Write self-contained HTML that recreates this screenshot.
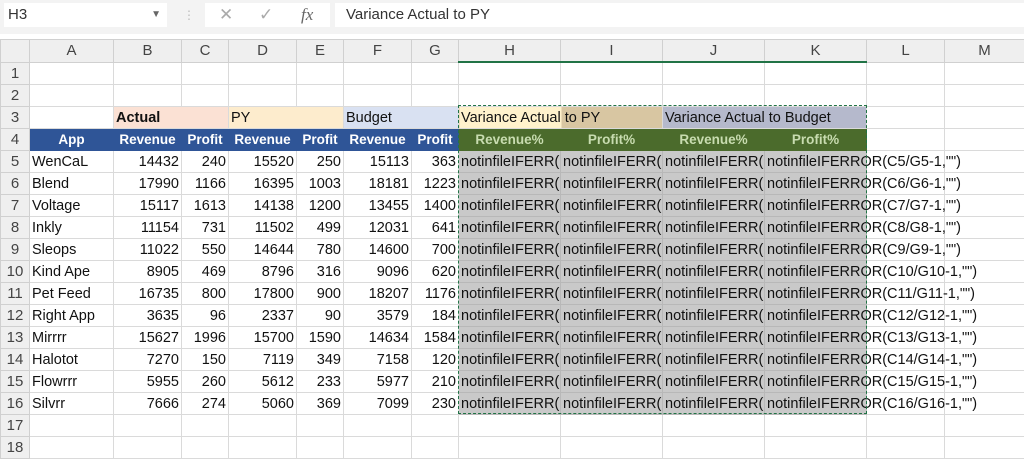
<!DOCTYPE html><html><head><meta charset="utf-8"><style>
body{margin:0;width:1024px;height:459px;overflow:hidden;background:#fff;font-family:"Liberation Sans",sans-serif;position:relative}
.top{position:absolute;left:0;top:0;width:1024px;height:34px;background:#f3f3f3}
.nb{position:absolute;left:4px;top:3px;width:163px;height:24px;background:#fff;font-size:15px;line-height:24px;padding-left:4px;box-sizing:border-box;color:#333}
.fx{position:absolute;left:205px;top:3px;width:125px;height:24px;background:#fff;color:#aaa;font-size:17px;line-height:24px}
.fb{position:absolute;left:335px;top:3px;width:689px;height:24px;background:#fff;font-size:15px;line-height:24px;padding-left:11px;box-sizing:border-box;color:#333}
table{position:absolute;left:0;top:39px;width:1024px;border-collapse:collapse;table-layout:fixed;font-size:14.5px}
td{border:1px solid #dadada;height:21px;padding:0 2px;white-space:nowrap;overflow:hidden;color:#111}
tr.h td{background:#efefef;text-align:center;color:#444;font-size:15px;border-color:#d0d0d0}
td.rh{background:#efefef;color:#444;text-align:center;font-size:15px;border-color:#d0d0d0}
td.sh{background:#d6d6d6;border-bottom:2px solid #217346!important}
td.n{text-align:right}
.b4{background:#2f5597;color:#fff;font-weight:bold;text-align:center;border-color:#2f5597;font-size:13.5px;padding:0 1px}
.g4{background:#4b6b2c;color:#c8dcb0;font-weight:bold;text-align:center;border-color:#4b6b2c;font-size:13.5px}
.s{background:#c9c9c9;border-color:#b8b8b8}
.k{background:#c9c9c9;border-color:#b8b8b8;overflow:visible}
</style></head><body>
<div class="top"><div class="nb">H3<span style="position:absolute;right:6px;font-size:10px;color:#666">▼</span></div>
<div style="position:absolute;left:183px;top:8px;color:#bbb;font-size:12px">⋮</div>
<div class="fx"><span style="position:absolute;left:14px">✕</span><span style="position:absolute;left:54px">✓</span><span style="position:absolute;left:96px;font-family:'Liberation Serif';font-style:italic;color:#666">fx</span></div>
<div class="fb">Variance Actual to PY</div></div>
<table>
<colgroup><col style="width:29px"><col style="width:84px"><col style="width:68px"><col style="width:47px"><col style="width:68px"><col style="width:47px"><col style="width:68px"><col style="width:47px"><col style="width:102px"><col style="width:102px"><col style="width:102px"><col style="width:102px"><col style="width:78px"><col style="width:80px"></colgroup>
<tr class="h"><td style="background:#efefef"></td><td>A</td><td>B</td><td>C</td><td>D</td><td>E</td><td>F</td><td>G</td><td class="sh">H</td><td class="sh">I</td><td class="sh">J</td><td class="sh">K</td><td>L</td><td>M</td></tr>
<tr><td class="rh">1</td><td></td><td></td><td></td><td></td><td></td><td></td><td></td><td></td><td></td><td></td><td></td><td></td><td></td></tr>
<tr><td class="rh">2</td><td></td><td></td><td></td><td></td><td></td><td></td><td></td><td></td><td></td><td></td><td></td><td></td><td></td></tr>
<tr><td class="rh">3</td><td></td><td colspan="2" style="background:#fbe1d4;font-weight:bold">Actual</td><td colspan="2" style="background:#fdeccd">PY</td><td colspan="2" style="background:#d9e1f2">Budget</td><td colspan="2" style="background:linear-gradient(90deg,#fff2cc 0 102px,#d8c6a2 102px)">Variance Actual to PY</td><td colspan="2" style="background:#b5b9cc">Variance Actual to Budget</td><td></td><td></td></tr>
<tr><td class="rh">4</td><td class="b4">App</td><td class="b4">Revenue</td><td class="b4">Profit</td><td class="b4">Revenue</td><td class="b4">Profit</td><td class="b4">Revenue</td><td class="b4">Profit</td><td class="g4">Revenue%</td><td class="g4">Profit%</td><td class="g4">Revenue%</td><td class="g4">Profit%</td><td></td><td></td></tr>
<tr><td class="rh">5</td><td>WenCaL</td><td class="n">14432</td><td class="n">240</td><td class="n">15520</td><td class="n">250</td><td class="n">15113</td><td class="n">363</td><td class="s">notinfileIFERR(</td><td class="s">notinfileIFERR(</td><td class="s">notinfileIFERR(</td><td class="k">notinfileIFERROR(C5/G5-1,"")</td><td></td><td></td></tr>
<tr><td class="rh">6</td><td>Blend</td><td class="n">17990</td><td class="n">1166</td><td class="n">16395</td><td class="n">1003</td><td class="n">18181</td><td class="n">1223</td><td class="s">notinfileIFERR(</td><td class="s">notinfileIFERR(</td><td class="s">notinfileIFERR(</td><td class="k">notinfileIFERROR(C6/G6-1,"")</td><td></td><td></td></tr>
<tr><td class="rh">7</td><td>Voltage</td><td class="n">15117</td><td class="n">1613</td><td class="n">14138</td><td class="n">1200</td><td class="n">13455</td><td class="n">1400</td><td class="s">notinfileIFERR(</td><td class="s">notinfileIFERR(</td><td class="s">notinfileIFERR(</td><td class="k">notinfileIFERROR(C7/G7-1,"")</td><td></td><td></td></tr>
<tr><td class="rh">8</td><td>Inkly</td><td class="n">11154</td><td class="n">731</td><td class="n">11502</td><td class="n">499</td><td class="n">12031</td><td class="n">641</td><td class="s">notinfileIFERR(</td><td class="s">notinfileIFERR(</td><td class="s">notinfileIFERR(</td><td class="k">notinfileIFERROR(C8/G8-1,"")</td><td></td><td></td></tr>
<tr><td class="rh">9</td><td>Sleops</td><td class="n">11022</td><td class="n">550</td><td class="n">14644</td><td class="n">780</td><td class="n">14600</td><td class="n">700</td><td class="s">notinfileIFERR(</td><td class="s">notinfileIFERR(</td><td class="s">notinfileIFERR(</td><td class="k">notinfileIFERROR(C9/G9-1,"")</td><td></td><td></td></tr>
<tr><td class="rh">10</td><td>Kind Ape</td><td class="n">8905</td><td class="n">469</td><td class="n">8796</td><td class="n">316</td><td class="n">9096</td><td class="n">620</td><td class="s">notinfileIFERR(</td><td class="s">notinfileIFERR(</td><td class="s">notinfileIFERR(</td><td class="k">notinfileIFERROR(C10/G10-1,"")</td><td></td><td></td></tr>
<tr><td class="rh">11</td><td>Pet Feed</td><td class="n">16735</td><td class="n">800</td><td class="n">17800</td><td class="n">900</td><td class="n">18207</td><td class="n">1176</td><td class="s">notinfileIFERR(</td><td class="s">notinfileIFERR(</td><td class="s">notinfileIFERR(</td><td class="k">notinfileIFERROR(C11/G11-1,"")</td><td></td><td></td></tr>
<tr><td class="rh">12</td><td>Right App</td><td class="n">3635</td><td class="n">96</td><td class="n">2337</td><td class="n">90</td><td class="n">3579</td><td class="n">184</td><td class="s">notinfileIFERR(</td><td class="s">notinfileIFERR(</td><td class="s">notinfileIFERR(</td><td class="k">notinfileIFERROR(C12/G12-1,"")</td><td></td><td></td></tr>
<tr><td class="rh">13</td><td>Mirrrr</td><td class="n">15627</td><td class="n">1996</td><td class="n">15700</td><td class="n">1590</td><td class="n">14634</td><td class="n">1584</td><td class="s">notinfileIFERR(</td><td class="s">notinfileIFERR(</td><td class="s">notinfileIFERR(</td><td class="k">notinfileIFERROR(C13/G13-1,"")</td><td></td><td></td></tr>
<tr><td class="rh">14</td><td>Halotot</td><td class="n">7270</td><td class="n">150</td><td class="n">7119</td><td class="n">349</td><td class="n">7158</td><td class="n">120</td><td class="s">notinfileIFERR(</td><td class="s">notinfileIFERR(</td><td class="s">notinfileIFERR(</td><td class="k">notinfileIFERROR(C14/G14-1,"")</td><td></td><td></td></tr>
<tr><td class="rh">15</td><td>Flowrrr</td><td class="n">5955</td><td class="n">260</td><td class="n">5612</td><td class="n">233</td><td class="n">5977</td><td class="n">210</td><td class="s">notinfileIFERR(</td><td class="s">notinfileIFERR(</td><td class="s">notinfileIFERR(</td><td class="k">notinfileIFERROR(C15/G15-1,"")</td><td></td><td></td></tr>
<tr><td class="rh">16</td><td>Silvrr</td><td class="n">7666</td><td class="n">274</td><td class="n">5060</td><td class="n">369</td><td class="n">7099</td><td class="n">230</td><td class="s">notinfileIFERR(</td><td class="s">notinfileIFERR(</td><td class="s">notinfileIFERR(</td><td class="k">notinfileIFERROR(C16/G16-1,"")</td><td></td><td></td></tr>
<tr><td class="rh">17</td><td></td><td></td><td></td><td></td><td></td><td></td><td></td><td></td><td></td><td></td><td></td><td></td><td></td></tr>
<tr><td class="rh">18</td><td></td><td></td><td></td><td></td><td></td><td></td><td></td><td></td><td></td><td></td><td></td><td></td><td></td></tr>
</table>
<div style="position:absolute;left:458px;top:105px;width:407px;height:307px;border:1px dashed #217346;pointer-events:none"></div>
</body></html>
